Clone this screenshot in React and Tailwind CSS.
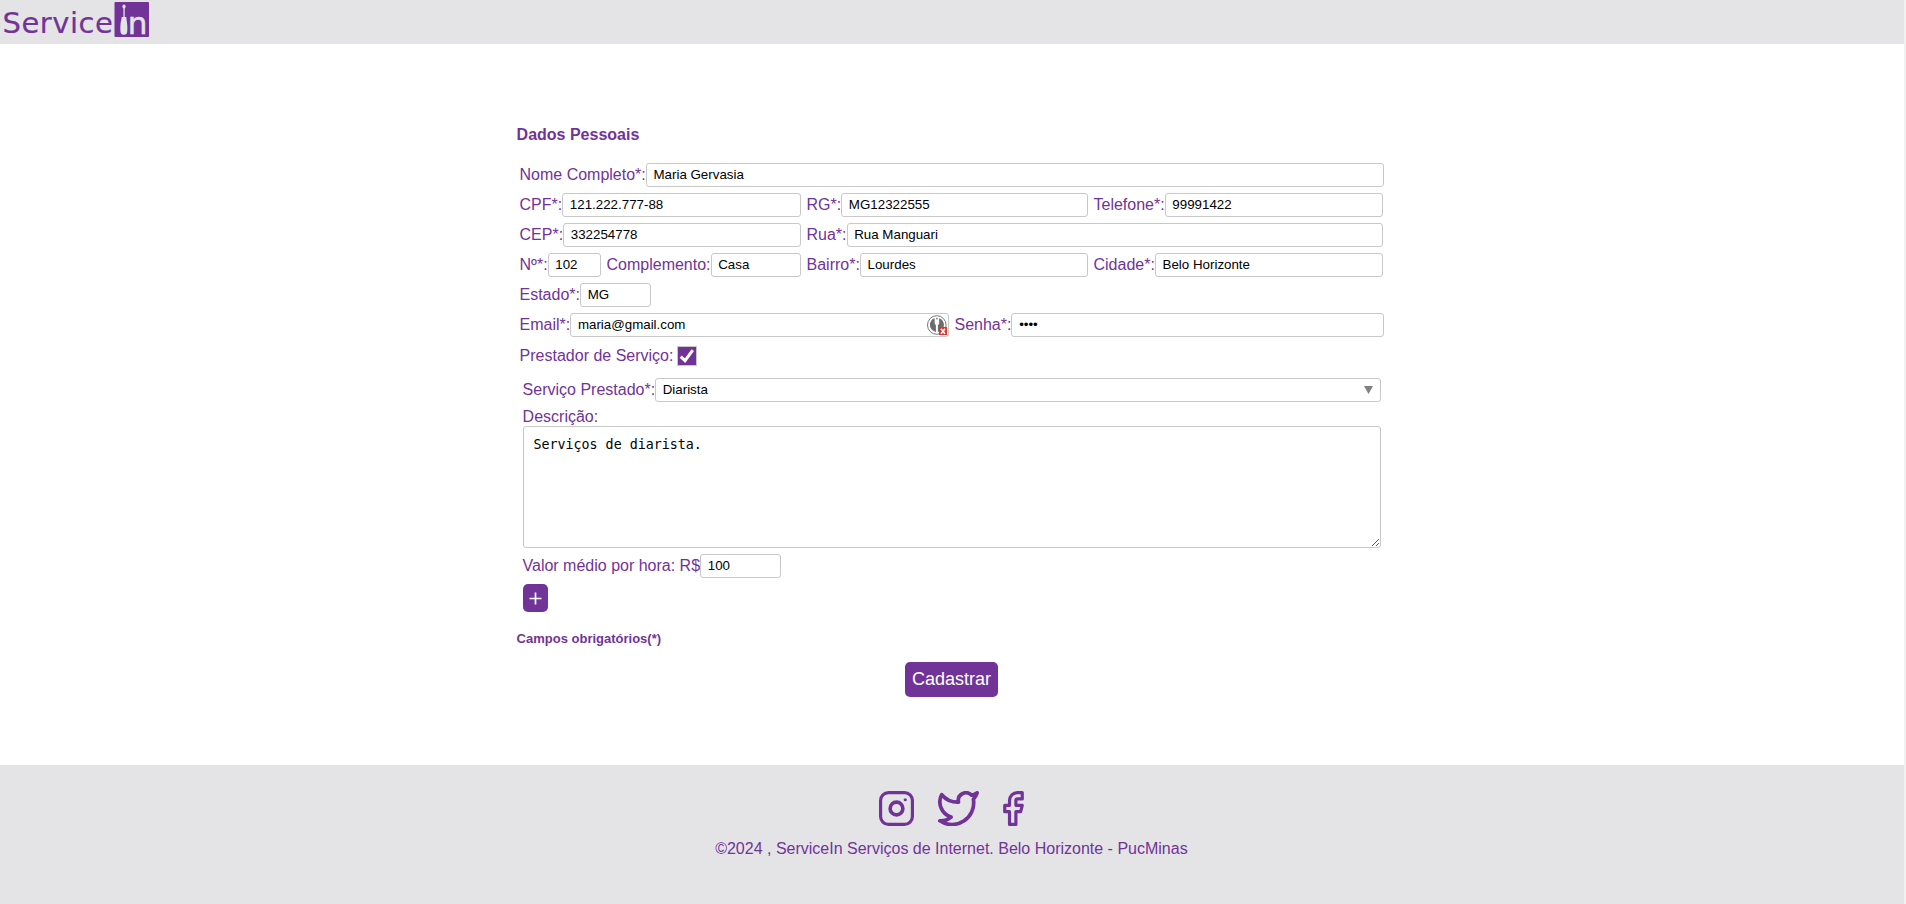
import React from "react";

const inputClass =
  "h-6 min-w-0 flex-1 rounded-[3px] border border-[#c8c8c8] bg-white pl-[6.7px] pr-1.5 pt-0 pb-[2px] text-[13.333px] text-black outline-none";

function Field({ label, value, width, type = "text", children }) {
  return (
    <label className={`flex h-6 items-center ${width}`}>
      <span className="ml-[0.5px] shrink-0 whitespace-nowrap leading-6">{label}</span>
      <input type={type} defaultValue={value} className={inputClass} />
      {children}
    </label>
  );
}

function Logo() {
  return (
    <svg width="152" height="44" viewBox="0 0 152 44" className="block overflow-visible">
      <rect x="114.500" y="2" width="34.500" height="35" rx="1" fill="#723399" />
      <text x="2.600" y="33.200" fontSize="29" letterSpacing="0.500" fill="#723399" stroke="#723399" strokeWidth="0.200" className="font-['DejaVu_Sans',sans-serif]">
        Service
      </text>
      <g fill="#e4e4e6">
        <ellipse cx="124" cy="6.500" rx="1.600" ry="1.900" />
        <rect x="123.400" y="6" width="1.300" height="11" />
        <path d="M121.700 17h4.600q.2 3 .7 5.500q.9 8 -.3 11q-.7 1.300 -2.800 1.300t-2.900-1.300q-1.200-3 -.3-11q.8-2.500 1-5.500z" />
      </g>
      <text x="127.800" y="34" fontSize="31" fill="#e4e4e6" stroke="#e4e4e6" strokeWidth="0.500" className="font-['DejaVu_Sans',sans-serif]">
        n
      </text>
    </svg>
  );
}

function PasswordManagerBadge() {
  return (
    <svg width="20" height="20" viewBox="0 0 20 20" className="absolute right-[2px] top-[2px]">
      <circle cx="9.800" cy="10" r="9.300" fill="#fff" stroke="#777" strokeWidth="1" />
      <path d="M7.400 3.200v5l1.500 2v6.800A7.400 7.400 0 0 1 7.400 3.200z" fill="#6d6d6d" />
      <path d="M12.400 3.200v5l-1.500 2v6.800A7.400 7.400 0 0 0 12.400 3.200z" fill="#6d6d6d" />
      <path d="M7.400 3.200A7.200 7.200 0 0 0 4 13.500L7.400 16zM12.400 3.200A7.200 7.200 0 0 1 15.800 13.500L12.400 16z" fill="#6d6d6d" />
      <circle cx="9.900" cy="3.600" r="0.900" fill="#777" />
      <rect x="12" y="12" width="8" height="8" fill="#e8302a" />
      <path d="M14 13.700l4 5M18 13.700l-4 5" stroke="#fff" strokeWidth="1.700" />
    </svg>
  );
}

const strokeProps = {
  fill: "none",
  stroke: "#723399",
  strokeWidth: 2,
  strokeLinecap: "round",
  strokeLinejoin: "round",
};

export default function App() {
  return (
    <div className="flex h-[904px] w-full overflow-hidden bg-white font-['Liberation_Sans',Arial,sans-serif] text-base text-[#723399]">
      <div className="flex w-[1904px] shrink-0 flex-col">
        <header className="h-11 bg-[#e4e4e6]">
          <Logo />
        </header>

        <main className="flex h-[721px] flex-col pl-[516px]">
          <h1 className="mt-[79px] h-6 pl-[0.6px] text-base font-bold leading-6">Dados Pessoais</h1>

          <form className="mt-4 flex w-[868px] flex-col">
            <div className="flex flex-col gap-1.5 pl-[3px]">
              <Field label="Nome Completo*:" value="Maria Gervasia" width="w-[865px]" />
              <div className="flex gap-[5px]">
                <Field label="CPF*:" value="121.222.777-88" width="w-[282px]" />
                <Field label="RG*:" value="MG12322555" width="w-[282px]" />
                <Field label="Telefone*:" value="99991422" width="w-[290px]" />
              </div>
              <div className="flex gap-[5px]">
                <Field label="CEP*:" value="332254778" width="w-[282px]" />
                <Field label="Rua*:" value="Rua Manguari" width="w-[577px]" />
              </div>
              <div className="flex gap-[5px]">
                <Field label="Nº*:" value="102" width="w-[82px]" />
                <Field label="Complemento:" value="Casa" width="w-[195px]" />
                <Field label="Bairro*:" value="Lourdes" width="w-[282px]" />
                <Field label="Cidade*:" value="Belo Horizonte" width="w-[290px]" />
              </div>
              <Field label="Estado*:" value="MG" width="w-[132px]" />
              <div className="flex gap-[5px]">
                <Field label="Email*:" value="maria@gmail.com" width="relative w-[430px]">
                  <PasswordManagerBadge />
                </Field>
                <Field label="Senha*:" value="1234" type="password" width="w-[430px]" />
              </div>
            </div>

            <label className="mt-[9px] flex h-5 items-center pl-[3px]">
              <span className="w-[158px] pl-[0.6px] leading-5">Prestador de Serviço:</span>
              <span className="flex size-5 items-center justify-center border border-[#c8c8c8] bg-[#723399]">
                <svg width="16" height="16" viewBox="0 0 16 16" fill="none">
                  <path d="M1.700 8.700l4.300 4L13.800 2.200" stroke="#fff" strokeWidth="3" />
                </svg>
              </span>
            </label>

            <div className="mt-3 flex w-[865px] flex-col pl-1.5">
              <div className="flex h-6 items-center">
                <span className="ml-[0.6px] shrink-0 leading-6">Serviço Prestado*:</span>
                <div className="flex h-6 flex-1 items-center justify-between rounded-[3px] border border-[#c8c8c8] pl-[6.6px] pr-[7px] text-[13.333px] text-black">
                  <span>Diarista</span>
                  <svg width="9" height="8" viewBox="0 0 9 8">
                    <path d="M0 0h9l-4.500 8z" fill="#808080" />
                  </svg>
                </div>
              </div>
              <span className="mt-1.5 h-[18px] pl-[0.6px] leading-[18px]">Descrição:</span>
              <textarea
                defaultValue="Serviços de diarista."
                className="ml-px block h-[122px] resize rounded-[3px] border border-[#c8c8c8] bg-white py-[10px] pl-[9.4px] pr-[10px] font-['DejaVu_Sans_Mono',monospace] text-[13.333px] leading-4 text-black outline-none"
              />
              <div className="mt-1.5">
                <Field label="Valor médio por hora: R$" value="100" width="w-[259px]" />
              </div>
              <button type="button" className="ml-px mt-1.5 flex h-7 w-[25px] items-center justify-center rounded-[5px] bg-[#723399] pr-px">
                <svg width="13" height="13" viewBox="0 0 13 13">
                  <path d="M0.500 6.500h12M6.500 0.500v12" stroke="#fff" strokeWidth="1.700" />
                </svg>
              </button>
            </div>

            <p className="mt-[17px] h-5 pl-[0.6px] text-[13px] font-bold leading-5">Campos obrigatórios(*)</p>
            <button type="button" className="ml-[389px] mt-[13px] h-[35px] w-[93px] rounded-[5px] bg-[#723399] text-[18px] leading-[35px] text-white">
              Cadastrar
            </button>
          </form>
        </main>

        <footer className="flex h-[139px] flex-col items-center bg-[#e4e4e6] pt-[26px]">
          <div className="flex h-[35px] gap-6 pr-[1px]">
            <svg width="35" height="35" viewBox="1 1 22 22" {...strokeProps}>
              <rect x="2" y="2" width="20" height="20" rx="5" />
              <circle cx="12" cy="12" r="4" strokeWidth="2.300" />
              <path d="M17.500 6.500h.01" />
            </svg>
            <svg width="41" height="35" viewBox="1 3 22 18.780" {...strokeProps}>
              <path d="M22 4s-.7 2.1-2 3.4c1.600 10-9.400 17.300-18 11.600 2.200.1 4.400-.6 6-2C3 15.500.5 9.600 3 5c2.200 2.600 5.600 4.100 9 4-.9-4.200 4-6.600 7-3.800 1.100 0 3-1.200 3-1.200z" />
            </svg>
            <svg width="21" height="35" viewBox="6 1 13 22" {...strokeProps}>
              <path d="M18 2h-3a5 5 0 0 0-5 5v3H7v4h3v8h4v-8h3l1-4h-4V7a1 1 0 0 1 1-1h3z" />
            </svg>
          </div>
          <p className="mt-[11px] pr-[1.2px] leading-6">©2024 , ServiceIn Serviços de Internet. Belo Horizonte - PucMinas</p>
        </footer>
      </div>
      <div className="flex-1 bg-[#f1f1f1]" />
    </div>
  );
}
